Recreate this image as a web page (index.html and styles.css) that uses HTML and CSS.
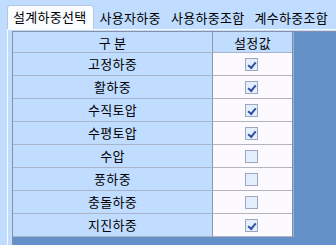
FILE: index.html
```html
<!DOCTYPE html>
<html>
<head>
  <title>설계하중선택</title>
  <link rel="stylesheet" href="styles.css">
</head>
<body>
  <div class="tabs">
    <div class="tab active">설계하중선택</div>
    <div class="tab">사용자하중</div>
    <div class="tab">사용하중조합</div>
    <div class="tab">계수하중조합</div>
  </div>
  <div class="panel">
    <div class="view">
      <div class="grid">
        <div class="cell head">구 분</div>
        <div class="cell head val">설정값</div>

        <div class="cell">고정하중</div>
        <div class="cell val"><span class="check on"></span></div>
        <div class="cell">활하중</div>
        <div class="cell val"><span class="check on"></span></div>
        <div class="cell">수직토압</div>
        <div class="cell val"><span class="check on"></span></div>
        <div class="cell">수평토압</div>
        <div class="cell val"><span class="check on"></span></div>
        <div class="cell">수압</div>
        <div class="cell val"><span class="check"></span></div>
        <div class="cell">풍하중</div>
        <div class="cell val"><span class="check"></span></div>
        <div class="cell">충돌하중</div>
        <div class="cell val"><span class="check"></span></div>
        <div class="cell">지진하중</div>
        <div class="cell val"><span class="check on"></span></div>
      </div>
    </div>
  </div>
</body>
</html>
```

FILE: styles.css
```css
html, body {
  margin: 0;
  height: 100%;
}
body {
  background-color: #c0dcff;
  font-family: "Noto Sans CJK KR", "Noto Sans", sans-serif;
  font-size: 13px;
  letter-spacing: 0.3px;
  color: #000;
  overflow: hidden;
}
.tabs {
  display: flex;
  align-items: flex-end;
  height: 29px;
  padding-left: 7px;
  box-sizing: border-box;
}
.tab {
  flex-shrink: 0;
  white-space: nowrap;
  height: 22px;
  line-height: 22px;
  padding: 0 4px 0 6px;
}
.tab.active {
  height: 23px;
  line-height: 22px;
  padding: 0 6px 0 5px;
  background-color: #fafcff;
  border: 1px solid #b4c8e4;
  border-bottom: none;
  border-radius: 3px 3px 0 0;
}
.panel {
  margin-left: 7px;
  height: calc(100% - 29px);
  box-sizing: border-box;
  border-left: 1px solid #f4faff;
  border-top: 1px solid #f4faff;
  padding: 1px 0 0 4px;
}
.view {
  height: 100%;
  box-sizing: border-box;
  background-color: #6490c8;
  border-left: 1px solid #8890a8;
  border-top: 1px solid #8890a8;
}
.grid {
  display: grid;
  grid-template-columns: 200px 79px;
  width: 280px;
  border-right: 1px solid #b0b0bc;
}
.cell {
  height: 22px;
  line-height: 22px;
  text-align: center;
  white-space: nowrap;
  background-color: #c0dcff;
  border-right: 1px solid #8c98b0;
  border-bottom: 1px solid #a8b4cc;
}
.cell.head {
  height: 20px;
  line-height: 21px;
}
.cell.val {
  border-right: none;
  background-color: #fcfaff;
  border-bottom-color: #b4b4c0;
  display: flex;
  align-items: center;
  justify-content: center;
}
.cell.head.val {
  background-color: #c0dcff;
  border-bottom-color: #a8b4cc;
}
.check {
  width: 11px;
  height: 11px;
  border: 1px solid #9ca8c0;
  background-color: #e4eefc;
  margin-right: 3px;
  position: relative;
}
.check.on::after {
  content: "";
  position: absolute;
  left: 2px;
  top: 1px;
  width: 6px;
  height: 3px;
  border-left: 2px solid #2c50a0;
  border-bottom: 2px solid #2c50a0;
  transform: translate(0, 2px) rotate(-50deg);
  transform-origin: center;
}
```
